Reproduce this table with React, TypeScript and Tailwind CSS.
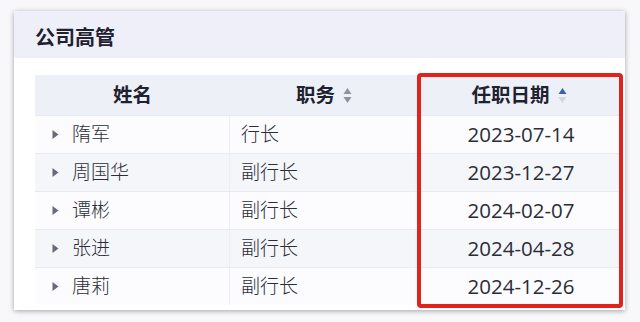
import React from "react";

const rows = [
  { name: "隋军", title: "行长", date: "2023-07-14" },
  { name: "周国华", title: "副行长", date: "2023-12-27" },
  { name: "谭彬", title: "副行长", date: "2024-02-07" },
  { name: "张进", title: "副行长", date: "2024-04-28" },
  { name: "唐莉", title: "副行长", date: "2024-12-26" },
];

function SortIcon({ active }: { active?: boolean }) {
  return (
    <svg width="9" height="17" viewBox="0 0 9 17" className="ml-[8px]">
      <path d="M4.5 1 L8.5 7 L0.5 7 Z" fill={active ? "#3a62ad" : "#8f929c"} />
      <path d="M4.5 16 L8.5 10 L0.5 10 Z" fill={active ? "#d3d6df" : "#8f929c"} />
    </svg>
  );
}

function Caret() {
  return (
    <svg width="7" height="11" viewBox="0 0 7 11">
      <path d="M0.5 1 L6.5 5.5 L0.5 10 Z" fill="#676a78" />
    </svg>
  );
}

export default function App() {
  return (
    <div
      className="w-[640px] h-[322px] bg-[#f8f8fa] pt-[11px] pl-[14px] overflow-hidden"
      style={{ fontFamily: '"Open Sans", "Noto Sans CJK SC", sans-serif' }}
    >
      <div className="w-[611px] h-[299px] bg-white shadow-[0_1px_5px_rgba(0,0,0,0.35)] flex flex-col">
        <div className="h-[47px] bg-[#eeeff8] flex items-center pt-[7px] pl-[21px] text-[20px] font-bold text-[#1e2230]">
          公司高管
        </div>
        <div className="pl-[21px] pr-[5px] pt-[17px]">
          <div className="relative w-[585px]">
            <div className="flex h-[40px] bg-[#eef0f8] text-[19.5px] font-bold text-[#1e2230]">
              <div className="w-[195px] flex items-center justify-center">姓名</div>
              <div className="w-[188px] flex items-center justify-center">
                职务
                <SortIcon />
              </div>
              <div className="w-[202px] flex items-center justify-center">
                任职日期
                <SortIcon active />
              </div>
            </div>
            {rows.map((r, i) => (
              <div
                key={r.name}
                className={`flex h-[38px] border-t border-[#e9eaf1] text-[19px] font-light text-[#2a2d36] ${
                  i % 2 === 1 ? "bg-[#f5f6fa]" : "bg-[#fcfcfe]"
                }`}
              >
                <div className="w-[195px] flex items-center pl-[17px] border-r border-[#eceef4]">
                  <Caret />
                  <span className="ml-[13px]">{r.name}</span>
                </div>
                <div className="w-[188px] flex items-center pl-[11px]">{r.title}</div>
                <div className="w-[202px] flex items-center justify-center pl-[4px] text-[20.5px] font-normal text-[#2a2d36]">
                  {r.date}
                </div>
              </div>
            ))}
            <div className="absolute left-[382px] top-[-2px] w-[206px] h-[235px] border-[4px] border-[#e2231c] rounded-[4px] pointer-events-none" />
          </div>
        </div>
      </div>
    </div>
  );
}
